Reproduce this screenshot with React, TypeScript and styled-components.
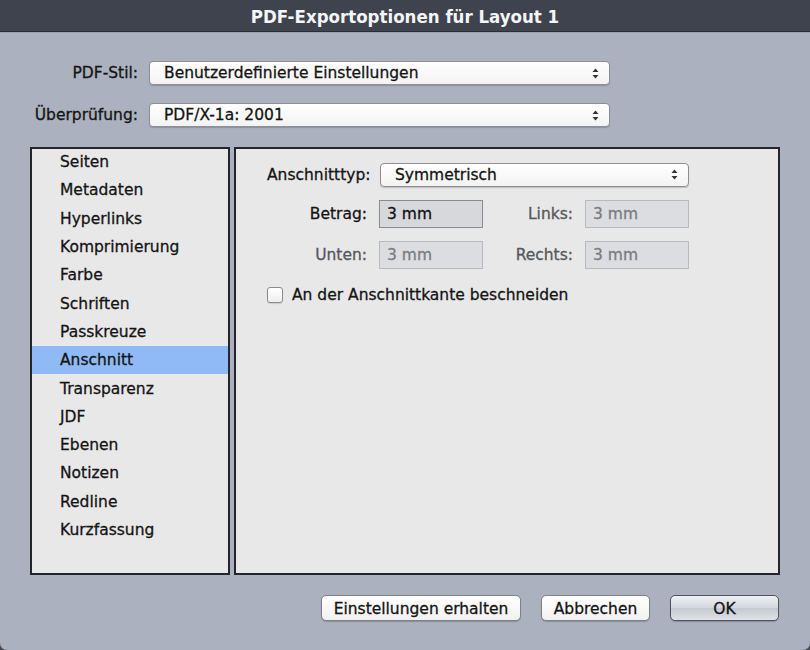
import React from "react"
import styled, { createGlobalStyle } from "styled-components"

const GlobalStyle = createGlobalStyle`
  html, body {
    margin: 0;
    padding: 0;
    background: #4a4d55;
  }
  * {
    box-sizing: border-box;
  }
`

const UI_FONT = `"DejaVu Sans", "Liberation Sans", sans-serif`

const sections = [
  "Seiten",
  "Metadaten",
  "Hyperlinks",
  "Komprimierung",
  "Farbe",
  "Schriften",
  "Passkreuze",
  "Anschnitt",
  "Transparenz",
  "JDF",
  "Ebenen",
  "Notizen",
  "Redline",
  "Kurzfassung",
]

const SelectArrows = () => (
  <svg width="7" height="11" viewBox="0 0 7 11">
    <path d="M3.5 0.5 L6.5 4 L0.5 4 Z" fill="#333" />
    <path d="M3.5 10.5 L6.5 7 L0.5 7 Z" fill="#333" />
  </svg>
)

const Select = ({ value }: { value: string }) => (
  <SelectBox>
    <span>{value}</span>
    <SelectArrows />
  </SelectBox>
)

export default function App() {
  return (
    <>
      <GlobalStyle />
      <Window>
        <TitleBar>PDF-Exportoptionen für Layout 1</TitleBar>

        <TopForm>
          <Label>PDF-Stil:</Label>
          <Select value="Benutzerdefinierte Einstellungen" />
          <Label>Überprüfung:</Label>
          <Select value="PDF/X-1a: 2001" />
        </TopForm>

        <Panels>
          <SideList>
            {sections.map((s) => (
              <ListItem key={s} $active={s === "Anschnitt"}>
                {s}
              </ListItem>
            ))}
          </SideList>

          <ContentPanel>
            <FieldGrid>
              <FieldLabel>Anschnitttyp:</FieldLabel>
              <WideCell>
                <Select value="Symmetrisch" />
              </WideCell>

              <FieldLabel>Betrag:</FieldLabel>
              <NumberInput>3 mm</NumberInput>
              <FieldLabel $disabled>Links:</FieldLabel>
              <NumberInput $disabled>3 mm</NumberInput>

              <FieldLabel $disabled>Unten:</FieldLabel>
              <NumberInput $disabled>3 mm</NumberInput>
              <FieldLabel $disabled>Rechts:</FieldLabel>
              <NumberInput $disabled>3 mm</NumberInput>
            </FieldGrid>

            <CheckRow>
              <CheckBox />
              <span>An der Anschnittkante beschneiden</span>
            </CheckRow>
          </ContentPanel>
        </Panels>

        <ButtonRow>
          <Button $width={200}>Einstellungen erhalten</Button>
          <Button $width={109}>Abbrechen</Button>
          <Button $width={109} $default>
            OK
          </Button>
        </ButtonRow>
      </Window>
    </>
  )
}

const Window = styled.div`
  width: 810px;
  height: 650px;
  background: #abb1bf;
  display: flex;
  flex-direction: column;
  border-radius: 0 0 7px 7px;
  overflow: hidden;
  font-family: ${UI_FONT};
  font-size: 15.5px;
  color: #141414;
  -webkit-text-stroke: 0.3px currentColor;
`

const TitleBar = styled.div`
  height: 32px;
  flex: none;
  background: #3f434e;
  border-bottom: 1px solid #2a2d34;
  box-shadow: 0 1px 0 #9ea4b2;
  display: flex;
  align-items: center;
  justify-content: center;
  color: #f4f5f7;
  font-family: "DejaVu Sans Condensed", "DejaVu Sans", sans-serif;
  font-weight: bold;
  font-size: 18.5px;
  padding-top: 1px;
  -webkit-text-stroke: 0;
`

const TopForm = styled.div`
  display: grid;
  grid-template-columns: 138px 461px;
  column-gap: 11px;
  row-gap: 18px;
  align-items: center;
  margin-top: 29px;
`

const Label = styled.div`
  text-align: right;
  white-space: nowrap;
`

const SelectBox = styled.div`
  height: 24px;
  width: 100%;
  display: flex;
  align-items: center;
  justify-content: space-between;
  padding: 0 10px 0 14px;
  background: linear-gradient(#ffffff, #f3f3f3);
  border: 1px solid #8d8f94;
  border-radius: 4px;
  box-shadow: 0 1px 1px rgba(0, 0, 0, 0.18);
  white-space: nowrap;
`

const Panels = styled.div`
  display: flex;
  gap: 4px;
  margin: 20px 0 0 30px;
  height: 428px;
`

const SideList = styled.div`
  width: 200px;
  background: #e8e8e8;
  border: 2px solid #23252a;
  display: flex;
  flex-direction: column;
`

const ListItem = styled.div<{ $active?: boolean }>`
  height: 28.3px;
  flex: none;
  display: flex;
  align-items: center;
  padding-left: 28px;
  background: ${(p) => (p.$active ? "#8fbaf5" : "transparent")};
  &:first-child {
    margin-top: -1px;
  }
`

const ContentPanel = styled.div`
  width: 546px;
  background: #e8e8e8;
  border: 2px solid #23252a;
  padding: 13px 0 0 31px;
`

const FieldGrid = styled.div`
  display: grid;
  grid-template-columns: 100px 104px 78px 104px;
  column-gap: 12px;
  grid-template-rows: 25px 28px 28px;
  row-gap: 13px;
  align-items: center;
`

const WideCell = styled.div`
  grid-column: 2 / span 3;
  margin-left: 1px;
`

const FieldLabel = styled.div<{ $disabled?: boolean }>`
  text-align: right;
  white-space: nowrap;
  color: ${(p) => (p.$disabled ? "#55575c" : "#141414")};
`

const NumberInput = styled.div<{ $disabled?: boolean }>`
  height: 28px;
  display: flex;
  align-items: center;
  padding-left: 7px;
  background: ${(p) => (p.$disabled ? "#dcdde0" : "#d6d8dc")};
  border: 1px solid ${(p) => (p.$disabled ? "#b9babd" : "#8a8b8f")};
  color: ${(p) => (p.$disabled ? "#7a7c81" : "#111")};
`

const CheckRow = styled.div`
  display: flex;
  align-items: center;
  gap: 9px;
  margin-top: 17px;
`

const CheckBox = styled.div`
  width: 16px;
  height: 16px;
  border: 1px solid #8a8c91;
  border-radius: 3px;
  background: linear-gradient(#ffffff, #eeeeee);
  box-shadow: 0 1px 1px rgba(0, 0, 0, 0.12);
  -webkit-text-stroke: 0;
`

const ButtonRow = styled.div`
  display: flex;
  justify-content: flex-end;
  gap: 20px;
  margin: 20px 31px 0 0;
`

const Button = styled.div<{ $width: number; $default?: boolean }>`
  width: ${(p) => p.$width}px;
  height: 26px;
  display: flex;
  align-items: center;
  justify-content: center;
  padding-top: 1px;
  border-radius: 5px;
  border: 1px solid ${(p) => (p.$default ? "#50535b" : "#7f8187")};
  background: ${(p) =>
    p.$default
      ? "linear-gradient(#eef0f3, #d4d8df 50%, #c3c8d1 51%, #dfe2e8)"
      : "linear-gradient(#ffffff, #f1f1f1)"};
  box-shadow: 0 1px 1px rgba(0, 0, 0, 0.2);
  white-space: nowrap;
`
